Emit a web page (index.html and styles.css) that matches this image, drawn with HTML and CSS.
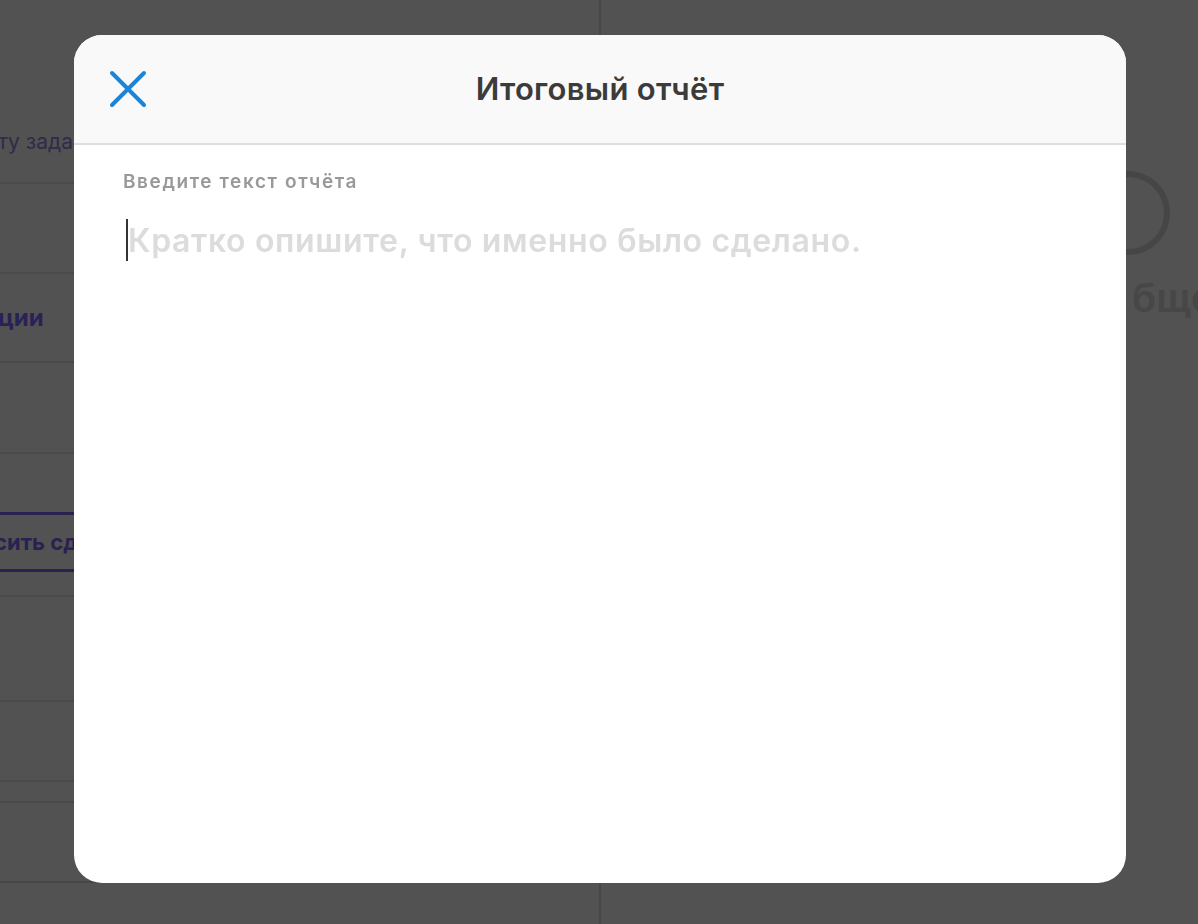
FILE: index.html
```html
<!DOCTYPE html>
<html lang="ru">
<head>
<meta charset="utf-8">
<title>Итоговый отчёт</title>
<link rel="stylesheet" href="styles.css">
</head>
<body>
<div class="page">
  <div class="left">
    <div class="row row-1"><span class="bg-text">ту задания</span></div>
    <div class="row row-2"></div>
    <div class="row row-3"><span class="bg-title">ции</span></div>
    <div class="row row-4"></div>
    <div class="row row-5"><div class="bg-btn">сить сдачу</div></div>
    <div class="row row-6"></div>
    <div class="row row-7"></div>
    <div class="row row-8"></div>
    <div class="row row-9"></div>
  </div>
  <div class="right">
    <div class="bg-ring"></div>
    <div class="bg-big">бщее</div>
  </div>
</div>

<div class="overlay">
  <div class="modal">
    <div class="modal-head">
      <button class="close" aria-label="Закрыть">
        <svg width="38" height="38" viewBox="0 0 38 38"><path d="M3 3 L35 35 M35 3 L3 35" stroke="#1b84d8" stroke-width="4" stroke-linecap="round" fill="none"/></svg>
      </button>
      <h1 class="title">Итоговый отчёт</h1>
    </div>
    <div class="modal-body">
      <div class="label">Введите текст отчёта</div>
      <div class="field"><span class="caret"></span><span class="placeholder">Кратко опишите, что именно было сделано.</span></div>
    </div>
  </div>
</div>
</body>
</html>
```

FILE: styles.css
```css
* { box-sizing: border-box; }
html, body { margin: 0; padding: 0; }
body {
  background: #525252;
  font-family: Inter, "Noto Sans", Roboto, sans-serif;
  width: 1198px;
  height: 924px;
  overflow: hidden;
}
.page {
  display: flex;
  height: 924px;
}
.left {
  width: 601px;
  border-right: 2px solid #474747;
  display: flex;
  flex-direction: column;
  overflow: hidden;
}
.row {
  border-bottom: 2px solid #4a4a4a;
  display: flex;
  align-items: center;
  flex: none;
}
.row-1 { height: 184px; padding-top: 100px; }
.row-2 { height: 90px; }
.row-3 { height: 89px; }
.row-4 { height: 91px; }
.row-5 { height: 143px; padding-top: 35px; }
.row-6 { height: 105px; }
.row-7 { height: 80px; }
.row-8 { height: 21px; }
.row-9 { height: 80px; border-bottom-color: #474747; }
.bg-text {
  color: #2f2b48;
  font-size: 21px;
  margin-left: -2px;
  white-space: nowrap;
}
.bg-title {
  color: #2a2158;
  font-size: 24px;
  font-weight: 700;
  margin-left: -2px;
}
.bg-btn {
  width: 100%;
  height: 60px;
  border-top: 3px solid #2a2150;
  border-bottom: 3px solid #2a2150;
  color: #2a2150;
  font-size: 22px;
  font-weight: 700;
  display: flex;
  align-items: center;
  margin-left: -6px;
  white-space: nowrap;
}
.right {
  flex: 1;
  display: flex;
  flex-direction: column;
  align-items: flex-end;
  padding-top: 171px;
}
.bg-ring {
  width: 84px;
  height: 84px;
  border: 6px solid #464646;
  border-radius: 50%;
  margin-right: 28px;
}
.bg-big {
  margin-top: 18px;
  font-size: 40px;
  font-weight: 600;
  color: #474747;
  margin-right: -40px;
  white-space: nowrap;
}

.overlay {
  position: fixed;
  inset: 0;
  display: flex;
  justify-content: flex-start;
  padding-top: 35px;
  padding-left: 74px;
}
.modal {
  width: 1052px;
  height: 848px;
  background: #ffffff;
  border-radius: 28px;
  overflow: hidden;
  display: flex;
  flex-direction: column;
}
.modal-head {
  height: 110px;
  background: #f9f9f9;
  border-bottom: 2px solid #dedede;
  display: flex;
  align-items: center;
  justify-content: center;
  position: relative;
  flex: none;
}
.close {
  position: absolute;
  left: 35px;
  top: 35px;
  width: 38px;
  height: 38px;
  padding: 0;
  border: 0;
  background: none;
  display: flex;
}
.title {
  margin: 0;
  font-size: 31px;
  font-weight: 600;
  color: #3b3b3b;
  letter-spacing: 0.3px;
  padding-bottom: 2px;
}
.modal-body {
  padding: 26px 49px;
  display: flex;
  flex-direction: column;
}
.label {
  font-size: 19px;
  font-weight: 600;
  color: #999999;
  line-height: 22px;
  letter-spacing: 1.6px;
}
.field {
  margin-top: 26px;
  display: flex;
  align-items: center;
  height: 42px;
}
.caret {
  width: 2px;
  height: 42px;
  background: #333333;
  margin-left: 3px;
  flex: none;
}
.placeholder {
  font-size: 32px;
  font-weight: 600;
  color: #dcdcdc;
  letter-spacing: 0.65px;
  white-space: nowrap;
}
```
